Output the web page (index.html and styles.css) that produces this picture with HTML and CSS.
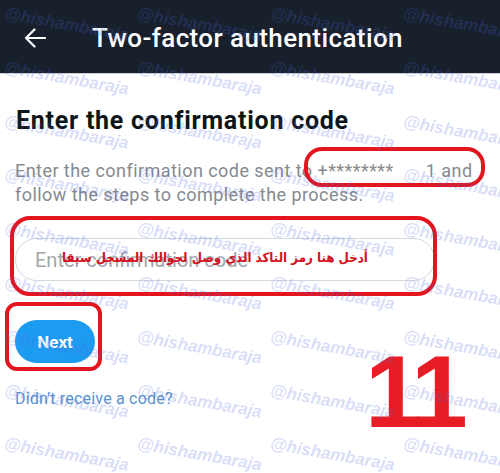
FILE: index.html
```html
<!DOCTYPE html>
<html lang="en">
<head>
<meta charset="utf-8">
<title>Two-factor authentication</title>
<link rel="stylesheet" href="styles.css">
</head>
<body>
<div class="screen">
  <header class="topbar">
    <svg class="back" width="22" height="20" viewBox="0 0 22 20" aria-hidden="true">
      <path d="M21 10 H2 M10.5 1.5 L2 10 L10.5 18.5" fill="none" stroke="#ffffff" stroke-width="2.2" stroke-linecap="round" stroke-linejoin="round"/>
    </svg>
    <h2 class="title">Two-factor authentication</h2>
  </header>

  <main class="content">
    <h1 class="heading">Enter the confirmation code</h1>
    <div class="desc-wrap">
      <p class="desc">Enter the confirmation code sent to +********<span class="gap"></span>1 and follow the steps to complete the process.</p>
      <span class="mark mark-phone"></span>
    </div>

    <div class="field-wrap">
      <input class="field" type="text" placeholder="Enter confirmation code">
      <span class="mark mark-field"></span>
      <span class="arabic" dir="rtl">أدخل هنا رمز التاكد الذي وصل لجوالك المسجل سبقا</span>
    </div>

    <div class="btn-wrap">
      <button class="next">Next</button>
      <span class="mark mark-btn"></span>
    </div>

    <a class="resend" href="#">Didn't receive a code?</a>
  </main>

  <div class="step">11</div>

  <div class="watermark" aria-hidden="true">
    <span>@hishambaraja</span><span>@hishambaraja</span><span>@hishambaraja</span><span>@hishambaraja</span>
    <span>@hishambaraja</span><span>@hishambaraja</span><span>@hishambaraja</span><span>@hishambaraja</span>
    <span>@hishambaraja</span><span>@hishambaraja</span><span>@hishambaraja</span><span>@hishambaraja</span>
    <span>@hishambaraja</span><span>@hishambaraja</span><span>@hishambaraja</span><span>@hishambaraja</span>
    <span>@hishambaraja</span><span>@hishambaraja</span><span>@hishambaraja</span><span>@hishambaraja</span>
    <span>@hishambaraja</span><span>@hishambaraja</span><span>@hishambaraja</span><span>@hishambaraja</span>
    <span>@hishambaraja</span><span>@hishambaraja</span><span>@hishambaraja</span><span>@hishambaraja</span>
    <span>@hishambaraja</span><span>@hishambaraja</span><span>@hishambaraja</span><span>@hishambaraja</span>
    <span>@hishambaraja</span><span>@hishambaraja</span><span>@hishambaraja</span><span>@hishambaraja</span>
  </div>
</div>
</body>
</html>
```

FILE: styles.css
```css
html, body {
  margin: 0;
  padding: 0;
  background: #ffffff;
}

.screen {
  position: relative;
  width: 500px;
  height: 473px;
  overflow: hidden;
  font-family: Roboto, "Noto Sans", sans-serif;
}

.topbar {
  height: 73px;
  background: #17202b;
  border-bottom: 1px solid #c9ced4;
  display: flex;
  align-items: center;
  padding-left: 24px;
}

.back {
  display: block;
  margin-top: 2px;
}

.title {
  margin: 0 0 0 46px;
  padding-top: 3px;
  color: #ffffff;
  font-size: 26px;
  font-weight: 500;
  letter-spacing: 0.4px;
}

.content {
  padding: 0 15px;
  display: flex;
  flex-direction: column;
  align-items: flex-start;
}

.heading {
  margin: 32px 0 0 1px;
  font-size: 25px;
  line-height: 30px;
  font-weight: 700;
  letter-spacing: 0.75px;
  color: #0f1419;
}

.desc-wrap {
  position: relative;
  margin-top: 23px;
  width: 470px;
}

.desc {
  margin: 0;
  font-size: 18px;
  line-height: 24px;
  letter-spacing: 0.45px;
  color: #858a90;
}

.gap {
  display: inline-block;
  width: 32px;
}

.mark {
  position: absolute;
  border: 4px solid #e3151f;
  pointer-events: none;
}

.mark-phone {
  left: 289px;
  top: -12px;
  width: 173px;
  height: 32px;
  border-radius: 18px;
}

.field-wrap {
  position: relative;
  margin-top: 31px;
}

.field {
  display: block;
  width: 420px;
  height: 43px;
  box-sizing: border-box;
  border: 1px solid #cfd9de;
  border-radius: 22px;
  padding: 0 0 0 19px;
  font-family: Roboto, "Noto Sans", sans-serif;
  font-size: 20px;
  color: #0f1419;
  background: transparent;
  outline: none;
}

.field::placeholder {
  color: #a2a7ac;
}

.mark-field {
  left: -5px;
  top: -22px;
  width: 419px;
  height: 72px;
  border-radius: 20px;
}

.arabic {
  position: absolute;
  left: 40px;
  top: 12px;
  width: 320px;
  text-align: center;
  font-family: "DejaVu Sans Condensed", "DejaVu Sans", sans-serif;
  font-size: 13.2px;
  font-weight: 700;
  color: #d3121e;
  white-space: nowrap;
}

.btn-wrap {
  position: relative;
  margin-top: 39px;
}

.next {
  display: block;
  width: 80px;
  height: 43px;
  border: 0;
  border-radius: 22px;
  background: #1d9bf0;
  color: #ffffff;
  font-family: Roboto, "Noto Sans", sans-serif;
  font-size: 17px;
  font-weight: 700;
  padding: 0;
}

.mark-btn {
  left: -10px;
  top: -18px;
  width: 89px;
  height: 61px;
  border-radius: 12px;
}

.resend {
  margin-top: 26px;
  font-size: 16px;
  line-height: 20px;
  letter-spacing: 0.2px;
  color: #5893cb;
  text-decoration: none;
}

.step {
  position: absolute;
  left: 365px;
  top: 341px;
  font-family: "Liberation Sans", Arial, sans-serif;
  font-size: 102px;
  line-height: 102px;
  font-weight: 700;
  letter-spacing: -5px;
  color: #e81c24;
}

.watermark {
  position: absolute;
  inset: 0;
  pointer-events: none;
  display: grid;
  grid-template-columns: repeat(4, 133px);
  grid-auto-rows: 53.8px;
  padding: 4px 0 0 6px;
}

.watermark span {
  display: block;
  white-space: nowrap;
  font-family: "Liberation Sans", Arial, sans-serif;
  font-size: 17px;
  line-height: 20px;
  font-weight: 700;
  font-style: italic;
  color: rgba(80, 100, 225, 0.22);
  transform: rotate(10deg);
  transform-origin: 0 0;
}
```
